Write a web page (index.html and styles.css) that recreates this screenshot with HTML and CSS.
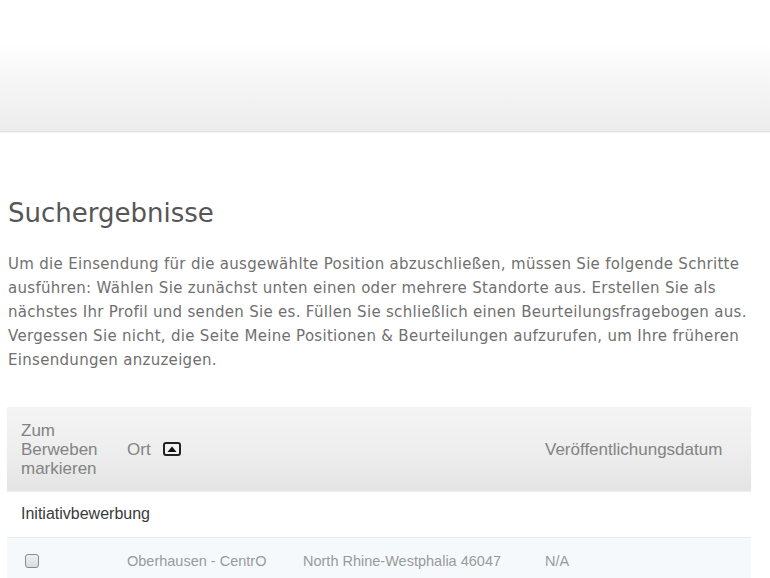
FILE: index.html
```html
<!DOCTYPE html>
<html lang="de">
<head>
<meta charset="utf-8">
<title>Suchergebnisse</title>
<link rel="stylesheet" href="styles.css">
</head>
<body>
<header class="topbar"></header>
<main class="content">
  <h1 class="title">Suchergebnisse</h1>
  <p class="intro">Um die Einsendung für die ausgewählte Position abzuschließen, müssen Sie folgende Schritte ausführen: Wählen Sie zunächst unten einen oder mehrere Standorte aus. Erstellen Sie als nächstes Ihr Profil und senden Sie es. Füllen Sie schließlich einen Beurteilungsfragebogen aus. Vergessen Sie nicht, die Seite Meine Positionen &amp; Beurteilungen aufzurufen, um Ihre früheren Einsendungen anzuzeigen.</p>

  <div class="results">
    <div class="row head">
      <div class="cell c1">Zum Berweben markieren</div>
      <div class="cell c2">Ort <span class="sort"><svg width="18" height="14" viewBox="0 0 18 14"><rect x="1" y="1" width="16" height="12" rx="2" ry="2" fill="#f2f2f2" stroke="#222" stroke-width="2"/><path d="M4.5 10 L9 4.5 L13.5 10 Z" fill="#111"/></svg></span></div>
      <div class="cell c3"></div>
      <div class="cell c4">Veröffentlichungsdatum</div>
    </div>
    <div class="group">Initiativbewerbung</div>
    <div class="row item">
      <div class="cell c1"><span class="check"></span></div>
      <div class="cell c2">Oberhausen - CentrO</div>
      <div class="cell c3">North Rhine-Westphalia 46047</div>
      <div class="cell c4">N/A</div>
    </div>
  </div>
</main>
</body>
</html>
```
FILE: styles.css
```css
html, body {
  margin: 0;
  padding: 0;
  background: #fff;
}

body {
  font-family: "DejaVu Sans", "Liberation Sans", sans-serif;
}

.topbar {
  height: 131px;
  background: linear-gradient(to bottom, #ffffff 0px, #ffffff 44px, #f6f6f6 80px, #ececec 131px);
  border-bottom: 1px solid #e2e2e2;
  box-shadow: 0 1px 0 #f4f4f4;
}

.content {
  padding: 0 15px 0 7px;
}

.title {
  margin: 66px 0 0 1px;
  font-size: 26px;
  line-height: 30px;
  font-weight: normal;
  color: #565656;
}

.intro {
  margin: 24px 0 0 1px;
  font-size: 15px;
  letter-spacing: 0.3px;
  line-height: 24px;
  color: #707070;
}

.results {
  margin-top: 35px;
  width: 744px;
  font-family: "Liberation Sans", Arial, sans-serif;
}

.row {
  display: grid;
  grid-template-columns: 106px 176px 242px 1fr;
  align-items: center;
}

.cell {
  padding-left: 14px;
  padding-right: 8px;
}

.head {
  height: 84px;
  background: linear-gradient(to bottom, #f4f4f4 0%, #eeeeee 50%, #e4e4e4 100%);
  box-shadow: 0 1px 1px rgba(0,0,0,0.06);
  color: #838383;
  font-size: 17px;
  line-height: 19px;
}

.head .c2 {
  display: flex;
  align-items: center;
  gap: 12px;
}

.sort {
  display: inline-flex;
}

.group {
  height: 46px;
  display: flex;
  align-items: center;
  padding-left: 14px;
  font-size: 16px;
  color: #3a3a3a;
}

.item {
  height: 46px;
  background: #f5f9fc;
  border-top: 1px solid #e6ecf0;
  color: #9a9a9a;
  font-size: 14.5px;
}

.item .c1 {
  padding-left: 18px;
  display: flex;
}

.check {
  width: 12px;
  height: 12px;
  border: 1.5px solid #8a8a8a;
  border-radius: 3px;
  background: linear-gradient(to bottom, #f0f0f0, #dcdcdc);
}
```
